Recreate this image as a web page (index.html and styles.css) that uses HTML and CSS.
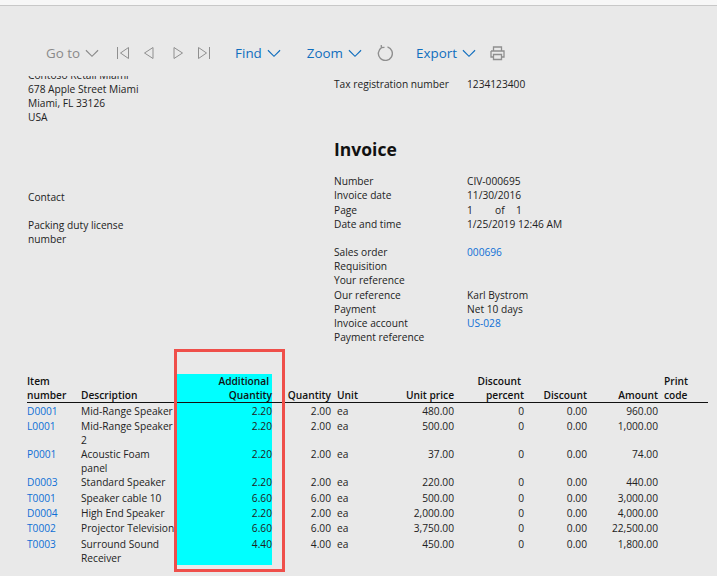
FILE: index.html
```html
<!DOCTYPE html>
<html lang="en">
<head>
<meta charset="utf-8">
<title>Invoice</title>
<link rel="stylesheet" href="styles.css">
</head>
<body>
<div class="topstrip"></div>
<nav class="toolbar">
  <span class="tool muted goto">Go to <svg class="chev" viewBox="0 0 15 9"><path d="M1 1l6.500 6.500L14 1"/></svg></span>
  <span class="nav-icons">
    <svg class="ico" viewBox="0 0 12 12"><path d="M.5 0v12M11.500 .5v11L3.500 6z"/></svg>
    <svg class="ico" viewBox="0 0 12 12"><path d="M10 .5v11L1.500 6z"/></svg>
    <svg class="ico third" viewBox="0 0 12 12"><path d="M2 .5v11L10.500 6z"/></svg>
    <svg class="ico" viewBox="0 0 12 12"><path d="M11.500 0v12M.5 .5v11L8.500 6z"/></svg>
  </span>
  <span class="tool link find">Find <svg class="chev" viewBox="0 0 15 9"><path d="M1 1l6.500 6.500L14 1"/></svg></span>
  <span class="tool link zoom">Zoom <svg class="chev" viewBox="0 0 15 9"><path d="M1 1l6.500 6.500L14 1"/></svg></span>
  <svg class="ico refresh" viewBox="0 0 16 16"><path d="M4.500 2.600A7 7 0 1 0 10.500 1.800M4.500 2.600L7.500 2.400M4.500 2.600L4.200 .2"/></svg>
  <span class="tool link export">Export <svg class="chev" viewBox="0 0 15 9"><path d="M1 1l6.500 6.500L14 1"/></svg></span>
  <svg class="ico printer" viewBox="0 0 15 15"><path d="M3.500 5V1h8v4M1 5h13v6h-2.500M1 5v6h2.500M3.500 8.500h8v5h-8z"/></svg>
</nav>

<main class="report">
  <section class="head">
    <div class="address">
      <div class="clip-line">Contoso Retail Miami</div>
      <div>678 Apple Street Miami</div>
      <div>Miami, FL 33126</div>
      <div>USA</div>
      <div class="contact">Contact</div>
      <div class="packing">Packing duty license<br>number</div>
    </div>
    <div class="details">
      <dl class="pair tax"><dt>Tax registration number</dt><dd>1234123400</dd></dl>
      <h1>Invoice</h1>
      <dl class="pair">
        <dt>Number</dt><dd>CIV-000695</dd>
        <dt>Invoice date</dt><dd>11/30/2016</dd>
        <dt>Page</dt><dd class="pages"><span>1</span><span>of</span><span>1</span></dd>
        <dt>Date and time</dt><dd>1/25/2019 12:46 AM</dd>
      </dl>
      <dl class="pair second">
        <dt>Sales order</dt><dd class="blue">000696</dd>
        <dt>Requisition</dt><dd></dd>
        <dt>Your reference</dt><dd></dd>
        <dt>Our reference</dt><dd>Karl Bystrom</dd>
        <dt>Payment</dt><dd>Net 10 days</dd>
        <dt>Invoice account</dt><dd class="blue">US-028</dd>
        <dt>Payment reference</dt><dd></dd>
      </dl>
    </div>
  </section>

  <div class="table-wrap">
    <table class="lines">
      <colgroup>
        <col class="c-item"><col class="c-desc"><col class="c-add"><col class="c-qty"><col class="c-unit"><col class="c-price"><col class="c-pct"><col class="c-disc"><col class="c-amt"><col class="c-print">
      </colgroup>
      <thead>
        <tr>
          <th>Item<br>number</th><th>Description</th>
          <th class="r add"><span class="inset">Additional</span><br>Quantity</th>
          <th class="r">Quantity</th><th class="u">Unit</th><th class="r">Unit price</th>
          <th class="r"><span class="inset">Discount</span><br>percent</th>
          <th class="r">Discount</th><th class="r">Amount</th><th class="u">Print<br>code</th>
        </tr>
      </thead>
      <tbody>
        <tr class="h15 first"><td class="blue">D0001</td><td>Mid-Range Speaker</td><td class="r add">2.20</td><td class="r">2.00</td><td class="u">ea</td><td class="r">480.00</td><td class="r">0</td><td class="r">0.00</td><td class="r">960.00</td><td></td></tr>
        <tr class="h28"><td class="blue">L0001</td><td>Mid-Range Speaker 2</td><td class="r add">2.20</td><td class="r">2.00</td><td class="u">ea</td><td class="r">500.00</td><td class="r">0</td><td class="r">0.00</td><td class="r">1,000.00</td><td></td></tr>
        <tr class="h28"><td class="blue">P0001</td><td>Acoustic Foam<br>panel</td><td class="r add">2.20</td><td class="r">2.00</td><td class="u">ea</td><td class="r">37.00</td><td class="r">0</td><td class="r">0.00</td><td class="r">74.00</td><td></td></tr>
        <tr class="h16"><td class="blue">D0003</td><td>Standard Speaker</td><td class="r add">2.20</td><td class="r">2.00</td><td class="u">ea</td><td class="r">220.00</td><td class="r">0</td><td class="r">0.00</td><td class="r">440.00</td><td></td></tr>
        <tr class="h15"><td class="blue">T0001</td><td>Speaker cable 10</td><td class="r add">6.60</td><td class="r">6.00</td><td class="u">ea</td><td class="r">500.00</td><td class="r">0</td><td class="r">0.00</td><td class="r">3,000.00</td><td></td></tr>
        <tr class="h15"><td class="blue">D0004</td><td>High End Speaker</td><td class="r add">2.20</td><td class="r">2.00</td><td class="u">ea</td><td class="r">2,000.00</td><td class="r">0</td><td class="r">0.00</td><td class="r">4,000.00</td><td></td></tr>
        <tr class="h16"><td class="blue">T0002</td><td>Projector Television</td><td class="r add">6.60</td><td class="r">6.00</td><td class="u">ea</td><td class="r">3,750.00</td><td class="r">0</td><td class="r">0.00</td><td class="r">22,500.00</td><td></td></tr>
        <tr class="h28"><td class="blue">T0003</td><td>Surround Sound<br>Receiver</td><td class="r add">4.40</td><td class="r">4.00</td><td class="u">ea</td><td class="r">450.00</td><td class="r">0</td><td class="r">0.00</td><td class="r">1,800.00</td><td></td></tr>
      </tbody>
    </table>
    <div class="callout"></div>
  </div>
</main>
</body>
</html>
```
FILE: styles.css
```css
html, body { margin: 0; padding: 0; height: 100%; }
body {
  width: 717px; height: 576px; overflow: hidden;
  background: #e9e9e9; color: #222;
  font-family: "Open Sans", "Noto Sans", sans-serif; font-size: 10.2px; line-height: 14px;
}
.topstrip { height: 5px; background: #f7f7f7; border-bottom: 1px solid #c8c8c8; }
.toolbar {
  display: flex; align-items: center; height: 70px; box-sizing: border-box;
  padding: 26px 0 2px 46px; font-size: 13.4px;
}
.tool { display: inline-flex; align-items: center; gap: 5px; white-space: nowrap; }
.muted { color: #8a8a8a; }
.link { color: #106ebe; }
.chev { width: 14px; height: 9px; fill: none; stroke: currentColor; stroke-width: 1.2; }
.ico { width: 12px; height: 12px; fill: none; stroke: #8f8f8f; stroke-width: 1; flex: none; }
.nav-icons { display: flex; gap: 14px; margin-left: 18px; }
.third { margin-left: 3px; }
.find { margin-left: 25px; }
.zoom { margin-left: 26px; }
.refresh { width: 16px; height: 16px; margin-left: 15px; stroke-width: 1.4; }
.export { margin-left: 23px; }
.printer { width: 15px; height: 15px; margin-left: 14px; stroke-width: 1.3; }

.report { height: 500px; overflow: hidden; position: relative; padding-left: 28px; }
.head { display: grid; grid-template-columns: 306px 1fr; margin-top: -8px; height: 306px; }
.address .contact { margin-top: 66px; }
.address .packing { margin-top: 14px; }
.details { padding-top: 9px; }
.pair { display: grid; grid-template-columns: 133px 1fr; margin: 0; grid-auto-rows: 14.2px; }
.pair dt, .pair dd { margin: 0; }
h1 { font-size: 17.5px; line-height: 24px; font-weight: 700; margin: 46px 0 13px; color: #111; }
.second { margin-top: 14px; }
.pages { display: flex; }
.pages span:nth-child(1) { width: 28px; }
.pages span:nth-child(2) { width: 21px; }
.blue { color: #0f6fd6; }

.table-wrap { position: relative; margin-left: -1px; width: 681px; }
.lines { border-collapse: collapse; table-layout: fixed; width: 681px; }
.c-item { width: 54px; } .c-desc { width: 96px; } .c-add { width: 95px; } .c-qty { width: 59px; }
.c-unit { width: 69px; } .c-price { width: 54px; } .c-pct { width: 70px; } .c-disc { width: 63px; }
.c-amt { width: 71px; } .c-print { width: 50px; }
th, td { padding: 0; vertical-align: top; text-align: left; white-space: nowrap; }
th { font-weight: 600; color: #111; height: 28px; vertical-align: bottom; border-bottom: 1px solid #111; }
td.r, th.r { text-align: right; }
.u { padding-left: 6px; }
th.u { padding-left: 6px; }
.inset { margin-right: 3px; }
.add { background: #00ffff; }
.h15 td { height: 15px; } .h16 td { height: 16px; } .h28 td { height: 28px; }
td { white-space: normal; }
.first td { height: 15px; padding-top: 1px; }
.callout {
  position: absolute; left: 147px; top: -25px; width: 111px; height: 223px;
  box-sizing: border-box; border: 3px solid #ef4f4a;
}
```
